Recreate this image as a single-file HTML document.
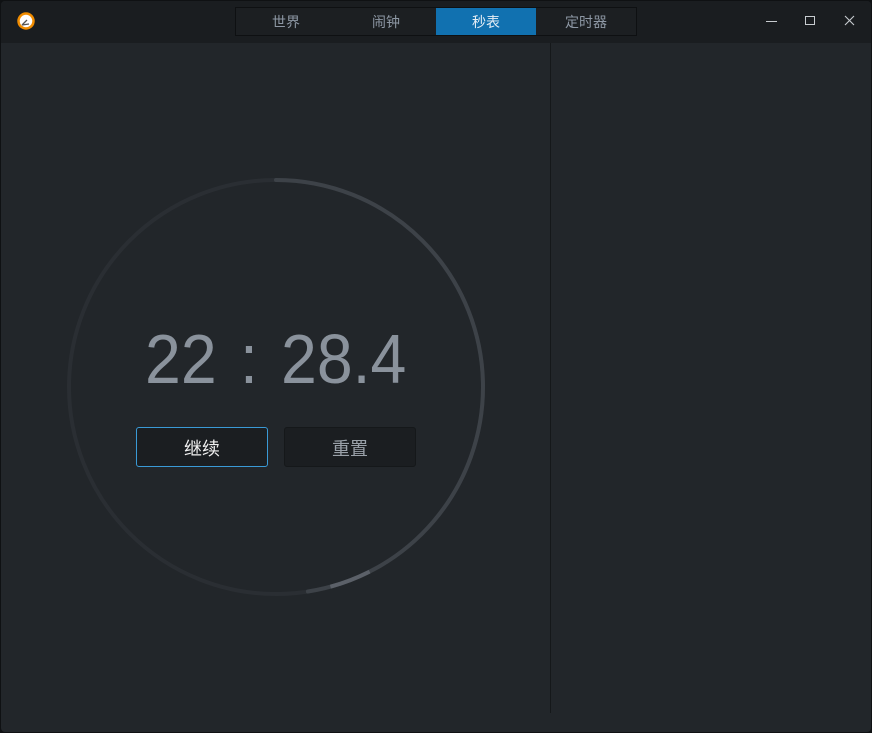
<!DOCTYPE html>
<html><head><meta charset="utf-8"><style>
*{margin:0;padding:0;box-sizing:border-box}
body{width:872px;height:733px;background:#0f1113;overflow:hidden;font-family:"Liberation Sans","Noto Sans CJK SC",sans-serif;position:relative}
.win{position:absolute;left:1px;top:1px;width:870px;height:731px;background:#22262a;border-radius:4px;overflow:hidden}
.title{position:absolute;left:0;top:0;width:870px;height:42px;background:#1a1d20}
.tabs{position:absolute;left:234px;top:6px;width:402px;height:29px;border:1px solid #0e1012;background:#1c1f22;display:flex}
.tabs div{width:100px;height:27px;line-height:29px;text-align:center;color:#8d97a4;font-size:14px}
.tabs .act{background:#1171b0;color:#e6eef5}
.div{position:absolute;left:549px;top:42px;width:1px;height:670px;background:#15181a}
.t{position:absolute;top:318px;font-size:70px;color:#8a929c;transform:scaleX(0.92);transform-origin:0 0;white-space:nowrap}
.b{position:absolute;top:426px;width:132px;height:40px;border-radius:3px;text-align:center;line-height:42px;font-size:18px}
</style></head><body>
<div class="win">
<div class="title">
<svg style="position:absolute;left:15px;top:10px" width="20" height="20" viewBox="0 0 20 20"><circle cx="10" cy="10" r="7.5" fill="#fff" stroke="#f08c00" stroke-width="2.5"/><path d="M6 14 L11 9 M6 14 L13 13" stroke="#555" stroke-width="1.3" fill="none"/></svg>
<div class="tabs"><div>世界</div><div>闹钟</div><div class="act">秒表</div><div>定时器</div></div>
<div style="position:absolute;left:765px;top:20px;width:11px;height:1px;background:#c8ccd0"></div>
<div style="position:absolute;left:804px;top:15px;width:10px;height:9px;border:1px solid #c8ccd0"></div>
<svg style="position:absolute;left:843px;top:14px" width="11" height="11"><path d="M1 1L10 10M10 1L1 10" stroke="#c8ccd0" stroke-width="1.1"/></svg>
</div>
<div class="div"></div>
<svg style="position:absolute;left:0;top:0" width="552" height="733">
<g transform="rotate(-90 275 386)">
<circle cx="275" cy="386" r="207" fill="none" stroke="#2a2e33" stroke-width="4"/>
<circle cx="275" cy="386" r="207" fill="none" stroke="#3d4248" stroke-width="4" stroke-dasharray="618 2000" stroke-linecap="round"/>
<circle cx="275" cy="386" r="207" fill="none" stroke="#5b6068" stroke-width="4" stroke-dasharray="42 2000" stroke-dashoffset="-553"/>
</g>
</svg>
<div class="t" style="left:144px">22</div>
<div class="t" style="left:239px">:</div>
<div class="t" style="left:280px">28.4</div>
<div class="b" style="left:135px;background:#1b1e21;border:1px solid #3a9ad6;color:#f0f0f0">继续</div>
<div class="b" style="left:283px;background:#1b1e21;border:1px solid #15181a;color:#9aa1a9">重置</div>
</div>
</body></html>
